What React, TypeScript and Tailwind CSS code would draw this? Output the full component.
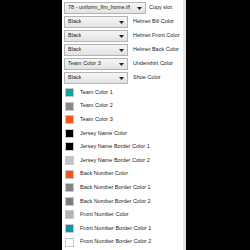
const selects = [
  { value: "Black", label: "Helmet Bill Color" },
  { value: "Black", label: "Helmet Front Color" },
  { value: "Black", label: "Helmet Back Color" },
  { value: "Team Color 3", label: "Undershirt Color" },
  { value: "Black", label: "Shoe Color" },
];

const swatches = [
  { color: "#17a0a0", label: "Team Color 1" },
  { color: "#88888c", label: "Team Color 2" },
  { color: "#f2541e", label: "Team Color 3" },
  { color: "#000000", label: "Jersey Name Color" },
  { color: "#000000", label: "Jersey Name Border Color 1" },
  { color: "#c2c2c4", label: "Jersey Name Border Color 2" },
  { color: "#f2541e", label: "Back Number Color" },
  { color: "#858588", label: "Back Number Border Color 1" },
  { color: "#7c7c7e", label: "Back Number Border Color 2" },
  { color: "#b0b5ba", label: "Front Number Color" },
  { color: "#1492a4", label: "Front Number Border Color 1" },
  { color: "#ffffff", label: "Front Number Border Color 2" },
];

const Combo = ({ value, wide }: { value: string; wide?: boolean }) => (
  <div
    className={`flex h-[12px] items-center justify-between border border-[#b4b4b4] bg-gradient-to-b from-[#f6f6f6] to-[#e2e2e2] pl-[3px] pr-[3px] ${
      wide ? "w-[82px]" : "w-[64px]"
    }`}
  >
    <span className="truncate">{value}</span>
    <svg width="5" height="3" viewBox="0 0 5 3" className="shrink-0">
      <path d="M0 0h5L2.5 3z" fill="#222" />
    </svg>
  </div>
);

export default function App() {
  return (
    <div className="flex h-[250px] w-[250px] bg-black">
      <div
        className="ml-[62px] flex h-full w-[124px] flex-col border-r-[3px] border-[#e4e4e4] bg-white pl-[2px] pt-[2px] text-[5.5px] leading-none whitespace-nowrap text-[#222]"
        style={{ fontFamily: "'Liberation Sans', Arial, sans-serif" }}
      >
        <div className="flex flex-col gap-[2px]">
          <div className="flex items-center gap-[3px]">
            <Combo value="78 - uniform_flm_home.iff" wide />
            <span>Copy slot</span>
          </div>
          {selects.map((s) => (
            <div key={s.label} className="flex items-center gap-[5px]">
              <Combo value={s.value} />
              <span>{s.label}</span>
            </div>
          ))}
        </div>
        <div className="mt-[4px] flex flex-col gap-[4.6px] pl-[1px]">
          {swatches.map((s) => (
            <div key={s.label} className="flex items-center gap-[6px]">
              <div
                className="h-[9px] w-[9px] border border-[#c8c8c8]"
                style={{ backgroundColor: s.color }}
              />
              <span>{s.label}</span>
            </div>
          ))}
        </div>
      </div>
    </div>
  );
}
